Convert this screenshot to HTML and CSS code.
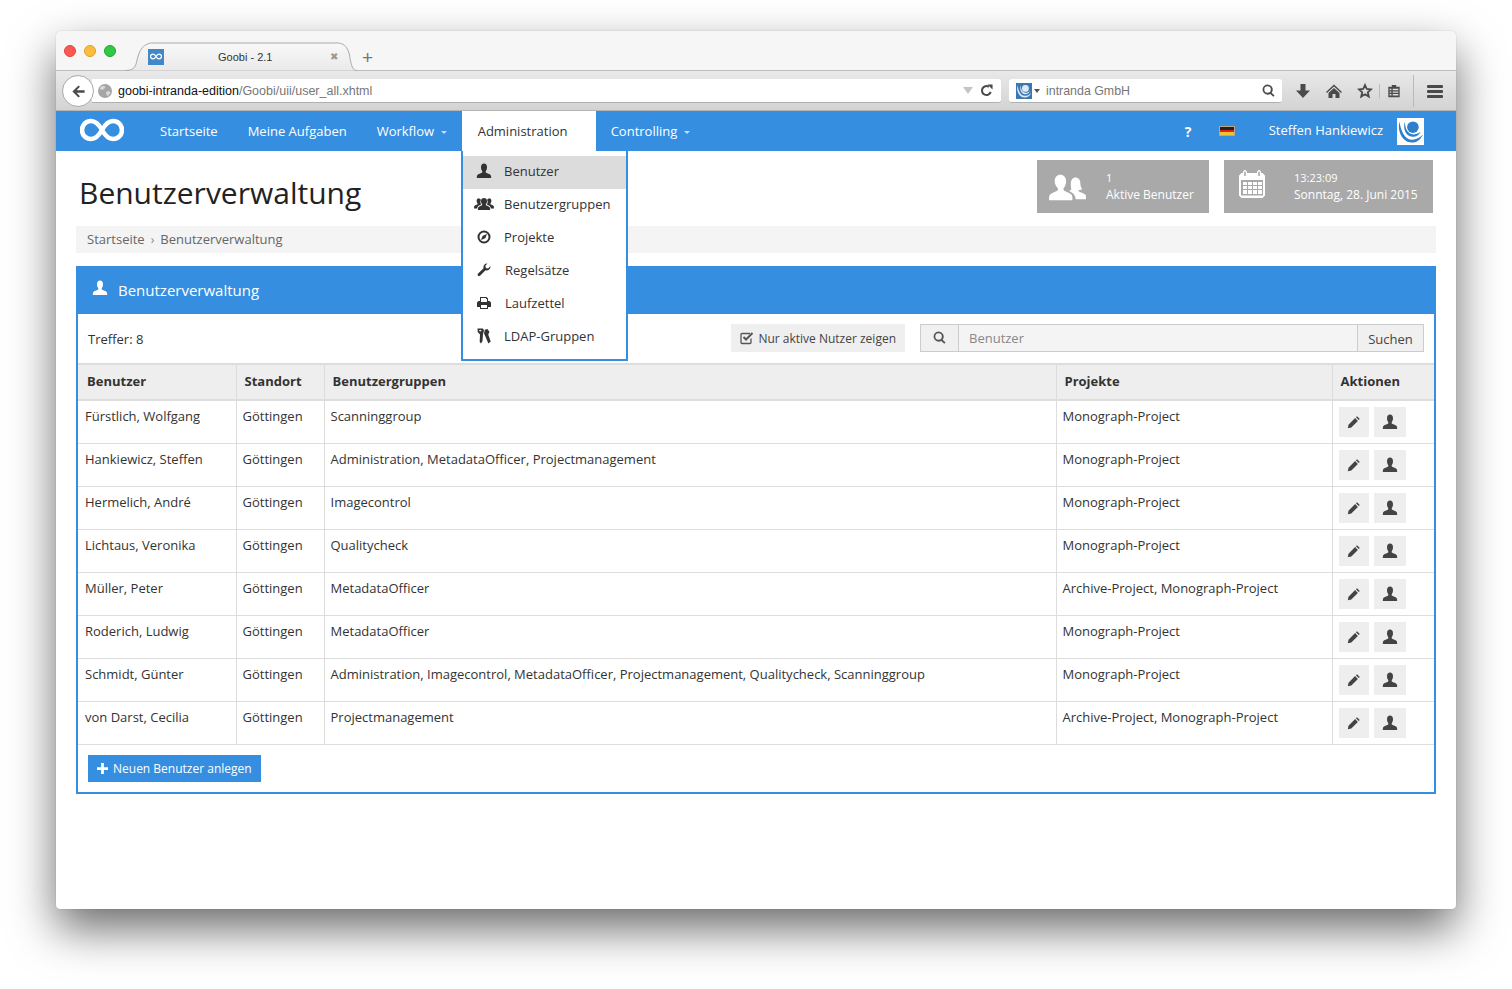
FILE: index.html
```html
<!DOCTYPE html>
<html lang="de">
<head>
<meta charset="utf-8">
<title>Goobi - 2.1</title>
<link rel="stylesheet" href="styles.css">
</head>
<body>
<svg class="defs" width="0" height="0" aria-hidden="true">
  <symbol id="i-user" viewBox="0 0 16 16"><path d="M8 .5c1.800 0 3 1.300 3 3.700 0 1.700-.6 3-1.100 3.800-.4.600-.3 1.400.3 1.800 1.100.600 3.500 1 4.400 2.200.5.700.6 2 .6 3H.8c0-1 .1-2.300.6-3 .9-1.200 3.300-1.600 4.400-2.200.6-.4.7-1.200.3-1.800C5.600 7.200 5 5.900 5 4.200 5 1.800 6.200.5 8 .5z"/></symbol>
  <symbol id="i-group" viewBox="0 0 20 14"><path d="M10 1c1.800 0 3 1.200 3 3.200 0 1.300-.6 2.400-1.100 3-.2.500 0 .9.500 1.200 1 .5 2.700.8 3.300 1.800.3.600.4 1.800.4 2.800H3.900c0-1 .1-2.200.4-2.800.6-1 2.300-1.300 3.300-1.800.5-.3.700-.7.500-1.200C7.600 6.600 7 5.500 7 4.200 7 2.200 8.200 1 10 1z"/><path d="M4.600 1.500c1 0 1.900.5 2.300 1.400-.5.900-.7 2-.4 3 .2.700.5 1.300.8 1.700-.7.400-2.200.8-3 1.500-.7.600-1 1.500-1.100 2.400H0c0-.9.100-2 .4-2.500.5-.9 2-1.200 2.800-1.600.4-.2.500-.6.400-1-.5-.6-1-1.600-1-2.700 0-1.600 1-2.200 2-2.200zM15.400 1.500c-1 0-1.900.5-2.300 1.400.5.900.7 2 .4 3-.2.700-.5 1.300-.8 1.700.7.400 2.200.8 3 1.500.7.600 1 1.500 1.100 2.400H20c0-.9-.1-2-.4-2.500-.5-.9-2-1.200-2.800-1.600-.4-.2-.5-.6-.4-1 .5-.6 1-1.600 1-2.700 0-1.600-1-2.200-2-2.200z"/></symbol>
  <symbol id="i-compass" viewBox="0 0 14 14"><path fill-rule="evenodd" d="M7 .5a6.500 6.500 0 1 0 0 13 6.500 6.500 0 0 0 0-13zm0 2a4.500 4.500 0 1 1 0 9 4.500 4.500 0 0 1 0-9z"/><path d="M10 4 8.300 8.300 4 10l1.700-4.300z"/></symbol>
  <symbol id="i-wrench" viewBox="0 0 14 14"><path d="M13.500 3.500a3.800 3.800 0 0 1-5 3.700L3 12.800a1.500 1.500 0 0 1-2.100-2.100L6.500 5.200A3.800 3.800 0 0 1 10.500.5L8.300 2.700l.6 2.200 2.200.6 2.200-2.200z"/></symbol>
  <symbol id="i-print" viewBox="0 0 14 14"><path fill-rule="evenodd" d="M3 1h6.500L11 2.500V5h1.500L14 6.500V11h-3v2H3v-2H0V6.500L1.500 5H3zm1 1v4h6V3H9V2zm0 7v3h6V9z"/></symbol>
  <symbol id="i-keys" viewBox="0 0 14 16"><path fill-rule="evenodd" d="M.5.500h5.500L7 2.500 6 6 5.500 13l-1.500 2.500L2.700 14 3 6.500.7 4zM2.300 2v1.200h2V2z"/><path d="M7.800 1.800 10.500 1l2 3-1.300 2.500 2.500 7-2.300 2-3.200-7.500-1.200-2.500z"/></symbol>
  <symbol id="i-pencil" viewBox="0 0 14 14"><path d="M10 1.200 12.800 4 11.700 5.100 8.900 2.300zM8.100 3.100l2.800 2.800-6.600 6.600L.800 13.200l.7-3.500z"/></symbol>
  <symbol id="i-search" viewBox="0 0 14 14"><path fill-rule="evenodd" d="M6 .5a5.500 5.500 0 0 1 4.400 8.800l3.100 3.100-1.400 1.400-3.100-3.100A5.500 5.500 0 1 1 6 .5zm0 2a3.500 3.500 0 1 0 0 7 3.500 3.500 0 0 0 0-7z"/></symbol>
  <symbol id="i-swirl" viewBox="0 0 28 28"><circle cx="16.500" cy="9.500" r="6"/><path d="M2.500 4C0 14 6 25.500 15 25.500c5 0 9-2.500 12-8.500-4 4-8 5.500-12 5.500C8 22.500 4 13 2.500 4z"/><path d="M8 4C6 11 9 19.500 16 19.500c4 0 7-1.500 8.500-5.500-2.500 2.500-5.500 3-7.500 3-6 0-8.500-6-9-13z"/></symbol>
  <symbol id="i-inf" viewBox="0 0 44 24"><path fill="none" stroke="currentColor" stroke-width="4.600" d="M22 12C19 6.500 15.500 3 11 3a9 9 0 0 0 0 18c4.500 0 8-3.500 11-9s6.500-9 11-9a9 9 0 0 1 0 18c-4.500 0-8-3.500-11-9z"/></symbol>
</svg>

<div class="window">
  <div class="tabstrip">
    <div class="lights"><span class="light red"></span><span class="light yellow"></span><span class="light green"></span></div>
    <div class="tab">
      <svg class="tab-shape" viewBox="0 0 232 29" preserveAspectRatio="none"><defs><linearGradient id="tabfill" x1="0" y1="0" x2="0" y2="1"><stop offset="0" stop-color="#f8f8f8"/><stop offset="1" stop-color="#eaeaea"/></linearGradient></defs><path fill="url(#tabfill)" stroke="#a9a9a9" d="M0 28.500c7 0 10-2 11.500-8 2-9 4-17 14-19.500h188c6 1 9 4 11 12 1.500 10 3 15.500 7.500 15.500"/></svg>
      <span class="favicon"><svg class="fav-inf"><use href="#i-inf"/></svg></span>
      <span class="tab-title">Goobi - 2.1</span>
      <span class="tab-close">✖</span>
    </div>
    <span class="newtab">+</span>
  </div>

  <div class="toolbar">
    <div class="back"><svg viewBox="0 0 16 16" class="back-arrow"><path d="M8 1.500 1.500 8 8 14.500l1.500-1.500L6 9.400h8.500V6.600H6L9.500 3z"/></svg></div>
    <div class="urlbar">
      <svg viewBox="0 0 14 14" class="globe"><circle cx="7" cy="7" r="7" fill="#a6a6a6"/><path d="M3 2.500c2-1 3.500-.5 4.500.5L6 5 3.500 6 2 4.500zM8 8l3-1 1.500 1.500L10 12 8.500 11z" fill="#d9d9d9"/></svg>
      <span class="url"><b class="url-host">goobi-intranda-edition</b>/Goobi/uii/user_all.xhtml</span>
      <span class="url-drop"></span>
      <svg viewBox="0 0 14 14" class="reload"><path fill="none" stroke="#4a4a4a" stroke-width="2.200" d="M11.500 8.500A4.800 4.800 0 1 1 9.500 3"/><path fill="#4a4a4a" d="M8 .5h5.500V6z"/></svg>
    </div>
    <div class="searchbar">
      <svg class="sb-logo"><use href="#i-swirl"/></svg>
      <span class="sb-caret"></span>
      <span class="sb-text">intranda GmbH</span>
      <svg class="sb-icon"><use href="#i-search"/></svg>
    </div>
    <div class="tools">
      <svg viewBox="0 0 16 16" class="tool"><path d="M5.500 1h5v6.500H15L8 15 1 7.500h4.500z"/></svg>
      <svg viewBox="0 0 16 16" class="tool"><path d="M8 1.500 16 9l-1 1-7-6.500L1 10 0 9zM8 5l5.500 5v5H9.500v-4h-3v4H2.500v-5z"/></svg>
      <svg viewBox="0 0 16 16" class="tool"><path fill="none" stroke="#4a4a4a" stroke-width="1.800" d="M8 2l1.800 4 4.200.4-3.200 2.900 1 4.300L8 11.300l-3.800 2.300 1-4.300L2 6.400 6.200 6z"/></svg>
      <span class="tool-sep"></span>
      <svg viewBox="0 0 16 16" class="tool tool-list"><path fill-rule="evenodd" d="M5.500 1h5v2H14.500v12h-13V3h4zm-2.500 4.500V7h2V5.500zm3.500 0V7H13V5.500zM3 8.500V10h2V8.500zm3.500 0V10H13V8.500zM3 11.500V13h2v-1.500zm3.500 0V13H13v-1.500z"/></svg>
      <span class="tool-sep tool-sep-tall"></span>
      <span class="burger"><i></i><i></i><i></i></span>
    </div>
  </div>

  <nav class="navbar">
    <svg class="brand"><use href="#i-inf"/></svg>
    <a class="nav-item">Startseite</a>
    <a class="nav-item">Meine Aufgaben</a>
    <a class="nav-item nav-workflow">Workflow <span class="caret"></span></a>
    <a class="nav-item nav-active">Administration</a>
    <a class="nav-item">Controlling <span class="caret"></span></a>
    <span class="nav-right">
      <span class="help">?</span>
      <span class="flag"><i class="f1"></i><i class="f2"></i><i class="f3"></i></span>
      <span class="username">Steffen Hankiewicz</span>
      <svg class="avatar"><use href="#i-swirl"/></svg>
    </span>
  </nav>

  <ul class="dropdown">
    <li class="dd-item dd-on"><svg class="dd-icon"><use href="#i-user"/></svg>Benutzer</li>
    <li class="dd-item"><svg class="dd-icon dd-wide"><use href="#i-group"/></svg>Benutzergruppen</li>
    <li class="dd-item"><svg class="dd-icon dd-small"><use href="#i-compass"/></svg>Projekte</li>
    <li class="dd-item dd-shift"><svg class="dd-icon dd-small"><use href="#i-wrench"/></svg>Regelsätze</li>
    <li class="dd-item dd-shift"><svg class="dd-icon dd-small"><use href="#i-print"/></svg>Laufzettel</li>
    <li class="dd-item"><svg class="dd-icon"><use href="#i-keys"/></svg>LDAP-Gruppen</li>
  </ul>

  <main class="page">
    <header class="page-head">
      <h1 class="page-title">Benutzerverwaltung</h1>
      <div class="stats">
        <div class="stat stat-users">
          <svg viewBox="0 0 40 28" class="stat-icon"><path d="M6 8c0-4.500 2.500-7 6-7s6 2.500 6 7c0 3-1 5.500-2.500 7-.5 1-.3 2.500.5 3 2 1.200 6 2 8 4.500.6 1 .7 3.500.7 5.500H0c0-2 .1-4.500.7-5.500 2-2.500 6-3.300 8-4.500.8-.5 1-2 .5-3C7.500 13.500 6 11 6 8z"/><path d="M23 10c0-3.500 2-6 5-6s5 2.500 5 6c0 3 1 5 2 6-1 1-3 1.200-4 1 0 1 .5 1.800 1.500 2.200 2 .8 4.500 1.500 6 3 .5 1 .5 3.500.5 4.800H28c0-3-1-5-3-6.500-1.500-1-3-1.700-4-2.500 1-.5 2-1 2.500-1.500-.5-1.500-.5-4-.5-6z"/></svg>
          <div class="stat-text"><span class="stat-top">1</span><span class="stat-bottom">Aktive Benutzer</span></div>
        </div>
        <div class="stat stat-date">
          <svg viewBox="0 0 26 28" class="stat-icon stat-cal"><path fill-rule="evenodd" d="M4 2.500C4 1 5 0 6 0s2 1 2 2.500V3h10v-.5C18 1 19 0 20 0s2 1 2 2.500V3h1.500L26 5.500v20L23.500 28h-21L0 25.500v-20L2.500 3H4zM5.200 2.500V6h1.600V2.500c0-1.300-1.600-1.300-1.600 0zm14 0V6h1.600V2.500c0-1.300-1.600-1.300-1.600 0zM2 10v15.500h22V10zm2 2h4v3H4zm5 0h4v3H9zm5 0h4v3h-4zm5 0h4v3h-4zM4 16h4v3H4zm5 0h4v3H9zm5 0h4v3h-4zm5 0h4v3h-4zM4 20h4v4H4zm5 0h4v4H9zm5 0h4v4h-4zm5 0h4v4h-4z"/></svg>
          <div class="stat-text"><span class="stat-top">13:23:09</span><span class="stat-bottom">Sonntag, 28. Juni 2015</span></div>
        </div>
      </div>
    </header>

    <div class="breadcrumb"><span>Startseite</span><span class="crumb-sep">›</span><span>Benutzerverwaltung</span></div>

    <section class="box">
      <div class="box-head"><svg class="box-icon"><use href="#i-user"/></svg>Benutzerverwaltung</div>
      <div class="box-tools">
        <span class="hits">Treffer: 8</span>
        <span class="filter"><svg viewBox="0 0 14 14" class="check"><path fill="none" stroke="#555" stroke-width="1.300" d="M11 7.500V11.500a1 1 0 0 1-1 1H2a1 1 0 0 1-1-1V3.500a1 1 0 0 1 1-1h8"/><path fill="none" stroke="#555" stroke-width="2" d="M3.500 6 6 8.500l6.500-6.500"/></svg>Nur aktive Nutzer zeigen</span>
        <div class="search">
          <span class="search-addon"><svg class="search-icon"><use href="#i-search"/></svg></span>
          <span class="search-input">Benutzer</span>
          <span class="search-btn">Suchen</span>
        </div>
      </div>
      <table class="users">
        <thead>
          <tr><th class="c1">Benutzer</th><th class="c2">Standort</th><th class="c3">Benutzergruppen</th><th class="c4">Projekte</th><th class="c5">Aktionen</th></tr>
        </thead>
        <tbody>
          <tr><td>Fürstlich, Wolfgang</td><td>Göttingen</td><td>Scanninggroup</td><td>Monograph-Project</td><td class="acts"><span class="act act-e"><svg><use href="#i-pencil"/></svg></span><span class="act act-u"><svg><use href="#i-user"/></svg></span></td></tr>
          <tr><td>Hankiewicz, Steffen</td><td>Göttingen</td><td>Administration, MetadataOfficer, Projectmanagement</td><td>Monograph-Project</td><td class="acts"><span class="act act-e"><svg><use href="#i-pencil"/></svg></span><span class="act act-u"><svg><use href="#i-user"/></svg></span></td></tr>
          <tr><td>Hermelich, André</td><td>Göttingen</td><td>Imagecontrol</td><td>Monograph-Project</td><td class="acts"><span class="act act-e"><svg><use href="#i-pencil"/></svg></span><span class="act act-u"><svg><use href="#i-user"/></svg></span></td></tr>
          <tr><td>Lichtaus, Veronika</td><td>Göttingen</td><td>Qualitycheck</td><td>Monograph-Project</td><td class="acts"><span class="act act-e"><svg><use href="#i-pencil"/></svg></span><span class="act act-u"><svg><use href="#i-user"/></svg></span></td></tr>
          <tr><td>Müller, Peter</td><td>Göttingen</td><td>MetadataOfficer</td><td>Archive-Project, Monograph-Project</td><td class="acts"><span class="act act-e"><svg><use href="#i-pencil"/></svg></span><span class="act act-u"><svg><use href="#i-user"/></svg></span></td></tr>
          <tr><td>Roderich, Ludwig</td><td>Göttingen</td><td>MetadataOfficer</td><td>Monograph-Project</td><td class="acts"><span class="act act-e"><svg><use href="#i-pencil"/></svg></span><span class="act act-u"><svg><use href="#i-user"/></svg></span></td></tr>
          <tr><td>Schmidt, Günter</td><td>Göttingen</td><td>Administration, Imagecontrol, MetadataOfficer, Projectmanagement, Qualitycheck, Scanninggroup</td><td>Monograph-Project</td><td class="acts"><span class="act act-e"><svg><use href="#i-pencil"/></svg></span><span class="act act-u"><svg><use href="#i-user"/></svg></span></td></tr>
          <tr><td>von Darst, Cecilia</td><td>Göttingen</td><td>Projectmanagement</td><td>Archive-Project, Monograph-Project</td><td class="acts"><span class="act act-e"><svg><use href="#i-pencil"/></svg></span><span class="act act-u"><svg><use href="#i-user"/></svg></span></td></tr>
        </tbody>
      </table>
      <div class="box-foot"><span class="add-btn"><svg viewBox="0 0 12 12" class="plus"><path d="M4.500 0h3v4.500H12v3H7.500V12h-3V7.500H0v-3h4.500z"/></svg>Neuen Benutzer anlegen</span></div>
    </section>
  </main>
</div>
</body>
</html>
```

FILE: styles.css
```css
* { box-sizing: border-box; }
html, body { margin: 0; height: 989px; overflow: hidden; background: #fff; }
body { padding: 31px 56px 0; font-family: "Open Sans", "Liberation Sans", sans-serif; font-size: 13px; color: #333; }
.defs { position: absolute; }

.window { position: relative; width: 1400px; height: 878px; background: #fff; border-radius: 5px 5px 4px 4px; box-shadow: 0 0 1px rgba(0,0,0,.35), 0 20px 46px rgba(0,0,0,.58); overflow: visible; }

/* tab strip */
.tabstrip { height: 40px; background: #f6f6f6; border-bottom: 1px solid #bdbdbd; border-radius: 5px 5px 0 0; display: flex; align-items: flex-end; position: relative; }
.lights { display: flex; gap: 8px; margin: 0 0 13px 8px; }
.light { width: 12px; height: 12px; border-radius: 50%; }
.red { background: #fc5753; border: 1px solid #e0443e; }
.yellow { background: #fdbc40; border: 1px solid #dea123; }
.green { background: #33c748; border: 1px solid #1aab29; }
.tab { position: relative; margin-left: 9px; width: 232px; height: 29px; display: flex; align-items: center; font-family: "Liberation Sans", sans-serif; font-size: 11px; color: #333; margin-bottom: -1px; }
.tab-shape { position: absolute; left: 0; top: 0; width: 232px; height: 29px; }
.favicon { position: relative; width: 16px; height: 16px; background: #4288c9; margin-left: 23px; display: flex; align-items: center; justify-content: center; color: #fff; }
.fav-inf { width: 12px; height: 7px; }
.tab-title { position: relative; margin-left: 54px; width: 112px; }
.tab-close { position: relative; color: #9a9a9a; font-size: 10px; }
.newtab { font-family: "Liberation Sans", sans-serif; font-size: 19px; line-height: 20px; color: #777; margin: 0 0 2px 5px; }

/* toolbar */
.toolbar { height: 40px; background: linear-gradient(#e9e9e9, #d3d3d3); border-bottom: 1px solid #b5b5b5; display: flex; align-items: center; padding: 1px 0 0 6px; position: relative; }
.back { width: 32px; height: 32px; border-radius: 50%; background: #fff; border: 1px solid #a9a9a9; display: flex; align-items: center; justify-content: center; position: relative; z-index: 1; }
.back-arrow { width: 15px; height: 15px; fill: #4a4a4a; }
.urlbar { width: 909px; height: 24px; margin-left: -2px; background: #fff; border-bottom: 1px solid #b0b0b0; border-radius: 0 3px 3px 0; display: flex; align-items: center; font-family: "Liberation Sans", sans-serif; font-size: 12.500px; color: #777; padding-left: 6px; }
.globe { width: 14px; height: 14px; flex: none; }
.url { margin-left: 6px; padding-top: 1px; flex: 1; }
.url-host { font-weight: 400; color: #111; }
.url-drop { width: 0; height: 0; border: 5px solid transparent; border-top: 7px solid #c4c4c4; border-bottom: 0; margin-right: 7px; }
.reload { width: 13px; height: 13px; margin-right: 8px; }
.searchbar { width: 273px; height: 24px; margin-left: 8px; background: #fff; border-bottom: 1px solid #b0b0b0; border-radius: 3px; display: flex; align-items: center; padding: 0 7px; font-family: "Liberation Sans", sans-serif; font-size: 12.400px; color: #777; }
.sb-logo { width: 16px; height: 16px; background: #3c77b4; fill: #dfeaf5; flex: none; }
.sb-caret { width: 0; height: 0; border: 3px solid transparent; border-top: 4px solid #555; border-bottom: 0; margin: 0 6px 0 2px; }
.sb-text { flex: 1; padding-top: 1px; }
.sb-icon { width: 13px; height: 13px; fill: #4a4a4a; }
.tools { display: flex; align-items: center; margin-left: 13px; flex: 1; position: relative; height: 100%; }
.tool { width: 16px; height: 16px; fill: #4a4a4a; margin-right: 15px; flex: none; }
.tool-list { width: 14px; height: 14px; margin-right: 0; }
.tool-sep { width: 1px; height: 14px; background: #bbb; margin: 0 7px 0 -9px; }
.tool-sep-tall { height: 32px; margin: 0 13px 0 12px; background: #b9b9b9; }
.burger { display: flex; flex-direction: column; gap: 2px; width: 16px; }
.burger i { height: 3px; background: #4a4a4a; border-radius: 1px; }

/* navbar */
.navbar { height: 40px; background: #368ee0; color: #fff; display: flex; align-items: center; padding-left: 24px; position: relative; }
.brand { width: 44px; height: 24px; color: #fff; margin-right: 21px; margin-top: -2px; }
.nav-item { padding: 0 15px; height: 40px; line-height: 40px; font-size: 13px; flex: none; white-space: nowrap; }
.nav-workflow { width: 100px; padding-right: 0; }
.nav-active { background: #fff; color: #333; width: 134px; padding-left: 16px; }
.caret { display: inline-block; width: 0; height: 0; border: 3px solid transparent; border-top: 3px solid rgba(255,255,255,.7); border-bottom: 0; margin-left: 3px; vertical-align: 2px; }
.nav-right { margin-left: auto; display: flex; align-items: center; padding-right: 32px; }
.help { font-weight: 700; font-size: 14px; width: 34px; }
.flag { display: flex; flex-direction: column; width: 16px; height: 10px; margin-right: 34px; border: 1px solid #b9a58a; }
.flag i { flex: 1; }
.f1 { background: #222; } .f2 { background: #d22; } .f3 { background: #f1c232; }
.username { font-size: 13px; margin-right: 14px; margin-top: -2px; }
.avatar { width: 27px; height: 27px; background: #fff; fill: #2f80cc; }

/* dropdown */
.dropdown { position: absolute; left: 405px; top: 120px; width: 167px; height: 210px; margin: 0; padding: 5px 0 0; list-style: none; background: #fff; border: 2px solid #368ee0; border-top: 0; z-index: 5; }
.dd-item { height: 33px; display: flex; align-items: center; padding: 0 0 3px 13px; font-size: 13px; color: #333; }
.dd-on { background: #dcdcdc; }
.dd-icon { width: 16px; height: 16px; fill: #333; margin-right: 12px; flex: none; }
.dd-wide { width: 20px; height: 14px; margin-left: -2px; margin-right: 10px; }
.dd-small { width: 14px; height: 14px; margin-left: 1px; margin-right: 13px; }
.dd-shift .dd-small { margin-right: 14px; }

/* page */
.page { padding: 0 20px; }
.page-head { height: 75px; display: flex; justify-content: space-between; padding: 9px 3px 0 3px; }
.page-title { margin: 15px 0 0; font-size: 30px; font-weight: 400; line-height: 36px; color: #222; }
.stats { display: flex; gap: 15px; }
.stat { height: 53px; background: #a9a9a9; color: #fff; display: flex; align-items: center; }
.stat-users { width: 172px; padding-left: 12px; }
.stat-date { width: 209px; padding-left: 15px; }
.stat-icon { width: 38px; height: 28px; fill: #fff; flex: none; margin-right: 19px; }
.stat-cal { width: 26px; margin-right: 29px; margin-top: -6px; }
.stat-text { display: flex; flex-direction: column; line-height: 17px; font-size: 12px; margin-top: -2px; }
.stat-top { font-size: 11px; }

.breadcrumb { height: 27px; background: #f4f4f4; padding: 0 0 2px 11px; display: flex; align-items: center; color: #666; font-size: 13px; }
.crumb-sep { margin: 2px 6px 0; color: #888; font-size: 12px; }

.box { margin-top: 13px; height: 528px; border: 2px solid #368ee0; display: flex; flex-direction: column; }
.box-head { margin: -2px -2px 0; padding: 0 0 0 16px; background: #368ee0; color: #fff; font-size: 15px; display: flex; align-items: center; height: 48px; flex: none; }
.box-icon { width: 16px; height: 16px; fill: #fff; margin-right: 10px; margin-top: -4px; }
.box-tools { height: 49px; display: flex; align-items: center; padding: 0 10px; flex: none; }
.hits { flex: 1; font-size: 13px; }
.filter { height: 28px; margin: 0 15px 2px 0; padding: 1px 9px 0; background: #efefef; color: #444; font-size: 12px; display: flex; align-items: center; }
.check { width: 14px; height: 14px; margin-right: 4px; }
.search { width: 504px; height: 28px; margin-bottom: 2px; display: flex; border: 1px solid #ccc; background: #f4f4f4; color: #888; }
.search-addon { width: 38px; background: #f0f0f0; border-right: 1px solid #ccc; display: flex; align-items: center; justify-content: center; }
.search-icon { width: 13px; height: 13px; fill: #555; }
.search-input { flex: 1; padding-left: 10px; line-height: 26px; }
.search-btn { width: 66px; background: #f0f0f0; border-left: 1px solid #ccc; color: #444; text-align: center; line-height: 28px; }

.users { width: 1356px; table-layout: fixed; border-collapse: collapse; flex: none; font-size: 13px; }
.users th { height: 36px; background: #eee; border: 1px solid #ddd; border-bottom-width: 2px; border-top: 2px solid #ddd; text-align: left; font-weight: 700; color: #333; padding: 0 8px 2px; font-size: 13px; }
.users th:first-child { padding-left: 9px; border-left: 0; }
.users td:first-child { padding-left: 7px; border-left: 0; }
.users th:last-child, .users td:last-child { border-right: 0; }
.c1 { width: 158px; } .c2 { width: 88px; } .c3 { width: 732px; } .c4 { width: 276px; } .c5 { width: 102px; }
.users td { height: 43px; padding: 5px 6px 0; vertical-align: top; border: 1px solid #ddd; line-height: 20px; color: #333; }
.users td.acts { padding: 6px 0 0 6px; white-space: nowrap; }
.act { display: inline-flex; align-items: center; justify-content: center; height: 30px; background: #eee; vertical-align: top; }
.act-e { width: 30px; margin-right: 5px; }
.act-u { width: 32px; }
.act svg { width: 14px; height: 14px; fill: #444; }
.act-u svg { width: 16px; height: 16px; }

.box-foot { padding: 10px 10px 0; }
.add-btn { display: inline-flex; align-items: center; height: 27px; width: 173px; padding-left: 9px; background: #368ee0; color: #fff; font-size: 12px; }
.plus { width: 11px; height: 11px; fill: #fff; margin-right: 5px; }
```
